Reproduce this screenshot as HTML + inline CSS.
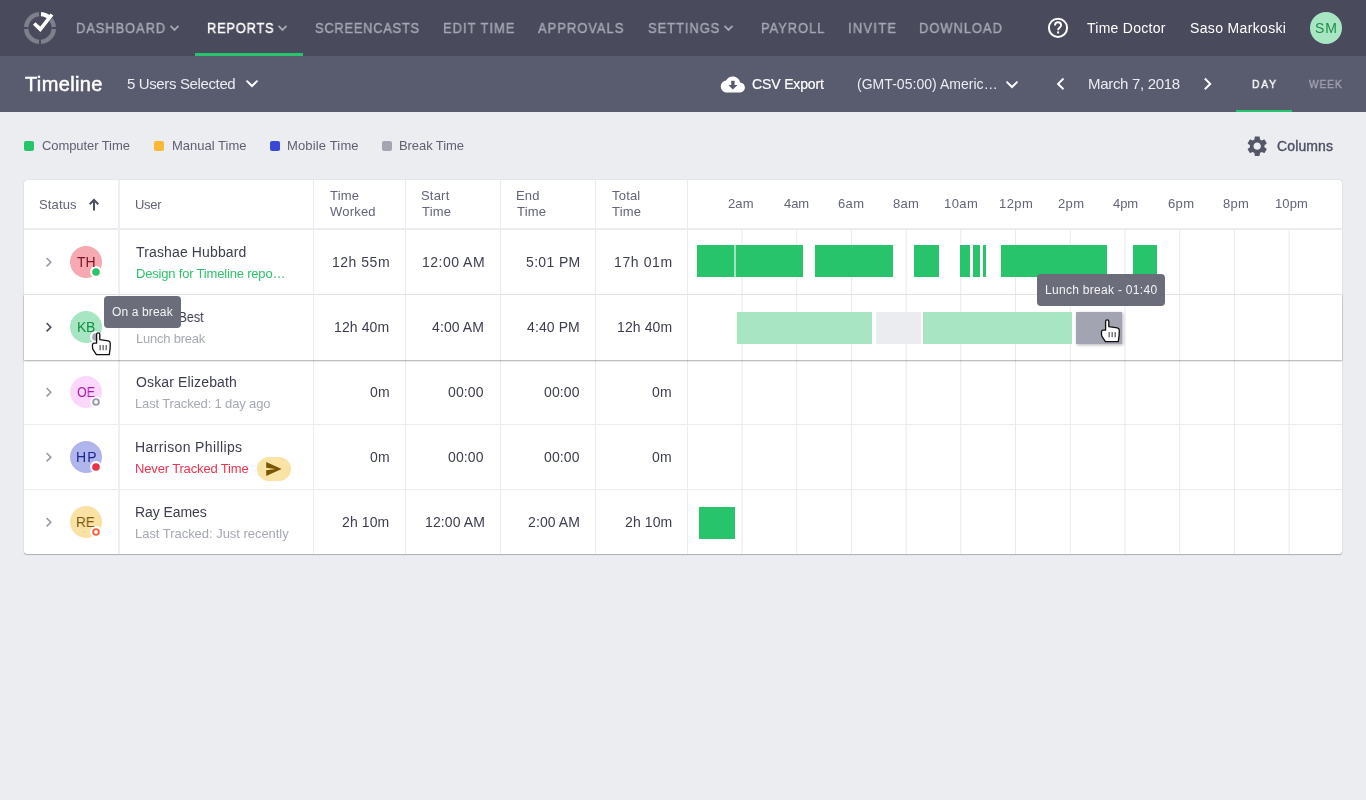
<!DOCTYPE html>
<html><head><meta charset="utf-8">
<style>
*{margin:0;padding:0;box-sizing:border-box;}
html,body{width:1366px;height:800px;overflow:hidden;background:#ecedf1;font-family:"Liberation Sans",sans-serif;position:relative;}
.a{position:absolute;}
.t{position:absolute;white-space:nowrap;line-height:1;will-change:transform;}
.vl{position:absolute;width:1px;background:#ebecf0;}
.hl{position:absolute;height:1px;background:#ebecf0;}
.av{position:absolute;width:32px;height:32px;border-radius:50%;}
.dot{position:absolute;width:12px;height:12px;border-radius:50%;background:#fff;}
.dot i{position:absolute;left:2px;top:2px;width:8px;height:8px;border-radius:50%;}
.bar{position:absolute;height:32px;background:#27c46c;}
.lg{position:absolute;top:141px;width:10px;height:10px;border-radius:2px;}
</style></head><body>
<!-- NAV -->
<div class="a" style="left:0;top:0;width:1366px;height:56px;background:#4a4a5d"></div>
<svg class="a" style="left:20px;top:8px" width="40" height="40" viewBox="0 0 40 40">
  <g fill="none" stroke="#7f808d" stroke-width="4.35">
    <path d="M30.95 11.44 A13.9 13.9 0 0 1 33.86 19.01"/>
    <path d="M33.86 20.99 A13.9 13.9 0 0 1 20.99 33.86"/>
    <path d="M19.01 33.86 A13.9 13.9 0 0 1 6.14 20.99"/>
    <path d="M6.14 19.01 A13.9 13.9 0 0 1 19.01 6.14"/>
  </g>
  <path d="M20.99 6.14 A13.9 13.9 0 0 1 30.17 10.52" fill="none" stroke="#fff" stroke-width="4.35"/>
  <path d="M15.4 14.2 L20.3 18.4 L30.4 5.6 L33.4 7.4 L20.5 24.0 L13.0 16.8 Z" fill="#fff"/>
</svg>
<svg class="a" style="left:168.6px;top:24px" width="11" height="8" viewBox="0 0 11 8"><path d="M1.5 1.9 L5.5 5.9 L9.5 1.9" fill="none" stroke="#a6a7b3" stroke-width="1.8"/></svg>
<svg class="a" style="left:276.7px;top:24px" width="11" height="8" viewBox="0 0 11 8"><path d="M1.5 1.9 L5.5 5.9 L9.5 1.9" fill="none" stroke="#a6a7b3" stroke-width="1.8"/></svg>
<svg class="a" style="left:722.6px;top:24px" width="11" height="8" viewBox="0 0 11 8"><path d="M1.5 1.9 L5.5 5.9 L9.5 1.9" fill="none" stroke="#a6a7b3" stroke-width="1.8"/></svg>
<div class="a" style="left:195px;top:53px;width:108px;height:3px;background:#27c46c"></div>
<svg class="a" style="left:1047px;top:17.4px" width="22" height="22" viewBox="0 0 22 22">
  <circle cx="11" cy="10.8" r="9.1" fill="none" stroke="#fff" stroke-width="2"/>
  <path d="M8 8.4 C8 6.5 9.3 5.2 11 5.2 C12.8 5.2 14.1 6.5 14.1 8.2 C14.1 10.5 11.1 10.6 11.1 13.2" fill="none" stroke="#fff" stroke-width="1.9"/>
  <rect x="10.1" y="14.4" width="2" height="2.1" fill="#fff"/>
</svg>
<div class="av" style="left:1310px;top:12px;background:#a8e6c3"></div>
<!-- SUB -->
<div class="a" style="left:0;top:56px;width:1366px;height:56px;background:#595b6f"></div>
<svg class="a" style="left:244px;top:78px" width="16" height="11" viewBox="0 0 16 11"><path d="M2.5 2.6 L8 8 L13.5 2.6" fill="none" stroke="#fff" stroke-width="2"/></svg>
<svg class="a" style="left:1004px;top:79px" width="16" height="11" viewBox="0 0 16 11"><path d="M2.5 2.6 L8 8 L13.5 2.6" fill="none" stroke="#fff" stroke-width="2"/></svg>
<svg class="a" style="left:1054px;top:77px" width="12" height="15" viewBox="0 0 12 15"><path d="M9.5 1.5 L4.1 6.9 L9.5 12.3" fill="none" stroke="#fff" stroke-width="2"/></svg>
<svg class="a" style="left:1202px;top:77px" width="12" height="15" viewBox="0 0 12 15"><path d="M2.8 1.5 L8.2 6.9 L2.8 12.3" fill="none" stroke="#fff" stroke-width="2"/></svg>
<svg class="a" style="left:720px;top:74.6px" width="26" height="19" viewBox="0 0 26 19">
  <path d="M20.2 7.6 C19.5 3.9 16.3 1.5 12.8 1.5 C9.9 1.5 7.3 3.1 6.1 5.6 C3.1 5.9 0.8 8.5 0.8 11.6 C0.8 14.9 3.5 17.6 6.8 17.6 L19.8 17.6 C22.6 17.6 24.9 15.3 24.9 12.6 C24.9 10 22.8 7.8 20.2 7.6 Z" fill="#fff"/>
  <path d="M11.2 5.8 H14.6 V10.1 H17.5 L12.9 14.6 L8.3 10.1 H11.2 Z" fill="#595b6f"/>
</svg>
<div class="a" style="left:1236px;top:110px;width:56px;height:2px;background:#27c46c"></div>
<!-- LEGEND -->
<div class="lg" style="left:24px;background:#27c46c"></div>
<div class="lg" style="left:154px;background:#f9b934"></div>
<div class="lg" style="left:270px;background:#3b48d6"></div>
<div class="lg" style="left:382px;background:#a4a5b0"></div>
<svg class="a" style="left:1244.9px;top:133.7px" width="24.4" height="24.4" viewBox="0 0 24 24">
  <path fill="#555769" d="M19.14 12.94c.04-.3.06-.61.06-.94 0-.32-.02-.64-.07-.94l2.03-1.58c.18-.14.23-.41.12-.61l-1.92-3.32c-.12-.22-.37-.29-.59-.22l-2.39.96c-.5-.38-1.03-.7-1.62-.94l-.36-2.54c-.04-.24-.24-.41-.48-.41h-3.84c-.24 0-.43.17-.47.41l-.36 2.54c-.59.24-1.13.57-1.62.94l-2.39-.96c-.22-.08-.47 0-.59.22L2.74 8.87c-.12.21-.08.47.12.61l2.03 1.58c-.05.3-.09.63-.09.94s.02.64.07.94l-2.03 1.58c-.18.14-.23.41-.12.61l1.92 3.32c.12.22.37.29.59.22l2.39-.96c.5.38 1.03.7 1.62.94l.36 2.54c.05.24.24.41.48.41h3.84c.24 0 .44-.17.47-.41l.36-2.54c.59-.24 1.13-.56 1.62-.94l2.39.96c.22.08.47 0 .59-.22l1.92-3.32c.12-.22.07-.47-.12-.61l-2.01-1.58zM12 15.6c-1.98 0-3.6-1.62-3.6-3.6s1.62-3.6 3.6-3.6 3.6 1.62 3.6 3.6-1.62 3.6-3.6 3.6z"/>
</svg>
<!-- CARD -->
<div class="a" style="left:24px;top:180px;width:1318px;height:374px;background:#fff;border-radius:3px;box-shadow:0 1px 1px rgba(0,0,0,0.25),0 0 1px rgba(0,0,0,0.22)"></div>
<div class="hl" style="left:24px;top:228px;width:1318px;height:2px;background:#ebecf0"></div>
<div class="hl" style="left:24px;top:294px;width:1318px"></div>
<div class="hl" style="left:24px;top:359px;width:1318px"></div>
<div class="hl" style="left:24px;top:424px;width:1318px"></div>
<div class="hl" style="left:24px;top:489px;width:1318px"></div>
<div class="vl" style="left:118px;top:180px;height:374px;width:2px;background:#eeeff2"></div>
<div class="vl" style="left:313px;top:180px;height:374px"></div>
<div class="vl" style="left:405px;top:180px;height:374px"></div>
<div class="vl" style="left:500px;top:180px;height:374px"></div>
<div class="vl" style="left:595px;top:180px;height:374px"></div>
<div class="vl" style="left:687px;top:180px;height:374px"></div>
<svg class="a" style="left:0;top:230px" width="1366" height="324"><g stroke="#e8eaeb" stroke-width="1"><line x1="742.00" y1="0" x2="742.00" y2="324"/><line x1="796.71" y1="0" x2="796.71" y2="324"/><line x1="851.42" y1="0" x2="851.42" y2="324"/><line x1="906.13" y1="0" x2="906.13" y2="324"/><line x1="960.84" y1="0" x2="960.84" y2="324"/><line x1="1015.55" y1="0" x2="1015.55" y2="324"/><line x1="1070.26" y1="0" x2="1070.26" y2="324"/><line x1="1124.97" y1="0" x2="1124.97" y2="324"/><line x1="1179.68" y1="0" x2="1179.68" y2="324"/><line x1="1234.39" y1="0" x2="1234.39" y2="324"/><line x1="1289.10" y1="0" x2="1289.10" y2="324"/></g></svg>
<!-- row 2 elevated -->
<div class="a" style="left:24px;top:295px;width:1318px;height:65px;background:#fff;box-shadow:0 1px 1.5px rgba(0,0,0,0.3),0 0 1px rgba(0,0,0,0.2)"></div>
<div class="vl" style="left:118px;top:295px;height:65px;width:2px;background:#eeeff2"></div>
<div class="vl" style="left:313px;top:295px;height:65px"></div>
<div class="vl" style="left:405px;top:295px;height:65px"></div>
<div class="vl" style="left:500px;top:295px;height:65px"></div>
<div class="vl" style="left:595px;top:295px;height:65px"></div>
<div class="vl" style="left:687px;top:295px;height:65px"></div>
<svg class="a" style="left:0;top:295px" width="1366" height="65"><g stroke="#e8eaeb" stroke-width="1"><line x1="742.00" y1="0" x2="742.00" y2="65"/><line x1="796.71" y1="0" x2="796.71" y2="65"/><line x1="851.42" y1="0" x2="851.42" y2="65"/><line x1="906.13" y1="0" x2="906.13" y2="65"/><line x1="960.84" y1="0" x2="960.84" y2="65"/><line x1="1015.55" y1="0" x2="1015.55" y2="65"/><line x1="1070.26" y1="0" x2="1070.26" y2="65"/><line x1="1124.97" y1="0" x2="1124.97" y2="65"/><line x1="1179.68" y1="0" x2="1179.68" y2="65"/><line x1="1234.39" y1="0" x2="1234.39" y2="65"/><line x1="1289.10" y1="0" x2="1289.10" y2="65"/></g></svg>
<svg class="a" style="left:86.7px;top:197px" width="14" height="16" viewBox="0 0 14 16"><path d="M7 13.6 V3.2 M2.7 7.2 L7 2.9 L11.3 7.2" fill="none" stroke="#4b4d60" stroke-width="2"/></svg>
<svg class="a" style="left:44px;top:255.6px" width="10" height="12" viewBox="0 0 10 12"><path d="M2.6 2 L6.8 6.2 L2.6 10.4" fill="none" stroke="#9a9ba8" stroke-width="1.6"/></svg>
<div class="av" style="left:70px;top:246px;background:#f6a9b0"></div>
<svg class="a" style="left:90px;top:266px" width="12" height="12" viewBox="0 0 12 12"><circle cx="6" cy="6" r="6" fill="#fff"/><circle cx="6" cy="6" r="3.8" fill="#2cc36b"/></svg>
<svg class="a" style="left:44px;top:320.6px" width="10" height="12" viewBox="0 0 10 12"><path d="M2.6 2 L6.8 6.2 L2.6 10.4" fill="none" stroke="#4b4d5e" stroke-width="1.6"/></svg>
<div class="av" style="left:70px;top:311px;background:#a8e6c3"></div>
<svg class="a" style="left:90px;top:331px" width="12" height="12" viewBox="0 0 12 12"><circle cx="6" cy="6" r="6" fill="#fff"/><circle cx="6" cy="6" r="3.8" fill="#a4a5b1"/></svg>
<svg class="a" style="left:44px;top:385.6px" width="10" height="12" viewBox="0 0 10 12"><path d="M2.6 2 L6.8 6.2 L2.6 10.4" fill="none" stroke="#9a9ba8" stroke-width="1.6"/></svg>
<div class="av" style="left:70px;top:376px;background:#fbd8fb"></div>
<svg class="a" style="left:90px;top:396px" width="12" height="12" viewBox="0 0 12 12"><circle cx="6" cy="6" r="6" fill="#fff"/><circle cx="6" cy="6" r="2.85" fill="#fff" stroke="#9a9ba8" stroke-width="1.9"/></svg>
<svg class="a" style="left:44px;top:450.6px" width="10" height="12" viewBox="0 0 10 12"><path d="M2.6 2 L6.8 6.2 L2.6 10.4" fill="none" stroke="#9a9ba8" stroke-width="1.6"/></svg>
<div class="av" style="left:70px;top:441px;background:#b1b5ee"></div>
<svg class="a" style="left:90px;top:461px" width="12" height="12" viewBox="0 0 12 12"><circle cx="6" cy="6" r="6" fill="#fff"/><circle cx="6" cy="6" r="3.8" fill="#ee2f4a"/></svg>
<svg class="a" style="left:44px;top:515.6px" width="10" height="12" viewBox="0 0 10 12"><path d="M2.6 2 L6.8 6.2 L2.6 10.4" fill="none" stroke="#9a9ba8" stroke-width="1.6"/></svg>
<div class="av" style="left:70px;top:506px;background:#fae2a5"></div>
<svg class="a" style="left:90px;top:526px" width="12" height="12" viewBox="0 0 12 12"><circle cx="6" cy="6" r="6" fill="#fff"/><circle cx="6" cy="6" r="2.85" fill="#fff" stroke="#f0603c" stroke-width="1.9"/></svg>
<div class="bar" style="left:697.4px;top:245px;width:105.6px;background:#27c46c;"></div>
<div class="bar" style="left:815px;top:245px;width:78.0px;background:#27c46c;"></div>
<div class="bar" style="left:914px;top:245px;width:25.0px;background:#27c46c;"></div>
<div class="bar" style="left:960px;top:245px;width:10.0px;background:#27c46c;"></div>
<div class="bar" style="left:972.5px;top:245px;width:7.0px;background:#27c46c;"></div>
<div class="bar" style="left:983.2px;top:245px;width:3.0px;background:#27c46c;"></div>
<div class="bar" style="left:1001px;top:245px;width:106.0px;background:#27c46c;"></div>
<div class="bar" style="left:1132.5px;top:245px;width:24.5px;background:#27c46c;"></div>
<div class="a" style="left:734px;top:245px;width:2px;height:32px;background:#a5e3bf"></div>
<div class="bar" style="left:736.5px;top:312px;width:135.0px;background:#a8e6c3;"></div>
<div class="bar" style="left:875.5px;top:312px;width:45.0px;background:#ebecf0;"></div>
<div class="bar" style="left:922.5px;top:312px;width:149.8px;background:#a8e6c3;"></div>
<div class="bar" style="left:1076px;top:312px;width:46.0px;background:#a3a4b1;box-shadow:1px 1px 3px rgba(0,0,0,0.3)"></div>
<div class="bar" style="left:699.3px;top:507px;width:35.3px;background:#27c46c;"></div>
<div class="a" style="left:257px;top:457px;width:34px;height:24px;border-radius:12px;background:#f9e3a6"></div>
<svg class="a" style="left:265px;top:461.8px" width="17" height="14" viewBox="0 0 17 14"><path d="M1.2 0.1 L16.6 7 L1.2 13.9 L1.2 8.2 L10.5 7 L1.2 5.8 Z" fill="#7a5604"/></svg>
<div class="t" style="left:75.82px;top:21.0px;font-size:14px;color:#a6a7b3;letter-spacing:1.025px;-webkit-text-stroke:0.4px #a6a7b3;transform:scaleX(0.92);transform-origin:0 0;">DASHBOARD</div>
<div class="t" style="left:206.72px;top:21.0px;font-size:14px;color:#ffffff;letter-spacing:0.824px;-webkit-text-stroke:0.4px #ffffff;transform:scaleX(0.92);transform-origin:0 0;">REPORTS</div>
<div class="t" style="left:314.91px;top:21.0px;font-size:14px;color:#a6a7b3;letter-spacing:0.819px;-webkit-text-stroke:0.4px #a6a7b3;transform:scaleX(0.92);transform-origin:0 0;">SCREENCASTS</div>
<div class="t" style="left:442.72px;top:21.0px;font-size:14px;color:#a6a7b3;letter-spacing:1.117px;-webkit-text-stroke:0.4px #a6a7b3;transform:scaleX(0.92);transform-origin:0 0;">EDIT TIME</div>
<div class="t" style="left:538.45px;top:21.0px;font-size:14px;color:#a6a7b3;letter-spacing:1.129px;-webkit-text-stroke:0.4px #a6a7b3;transform:scaleX(0.92);transform-origin:0 0;">APPROVALS</div>
<div class="t" style="left:647.61px;top:21.0px;font-size:14px;color:#a6a7b3;letter-spacing:1.062px;-webkit-text-stroke:0.4px #a6a7b3;transform:scaleX(0.92);transform-origin:0 0;">SETTINGS</div>
<div class="t" style="left:761.02px;top:21.0px;font-size:14px;color:#a6a7b3;letter-spacing:1.058px;-webkit-text-stroke:0.4px #a6a7b3;transform:scaleX(0.92);transform-origin:0 0;">PAYROLL</div>
<div class="t" style="left:848.34px;top:21.0px;font-size:14px;color:#a6a7b3;letter-spacing:1.419px;-webkit-text-stroke:0.4px #a6a7b3;transform:scaleX(0.92);transform-origin:0 0;">INVITE</div>
<div class="t" style="left:919.42px;top:21.0px;font-size:14px;color:#a6a7b3;letter-spacing:1.080px;-webkit-text-stroke:0.4px #a6a7b3;transform:scaleX(0.92);transform-origin:0 0;">DOWNLOAD</div>
<div class="t" style="left:1086.67px;top:21.0px;font-size:14px;color:#ffffff;letter-spacing:0.270px;">Time Doctor</div>
<div class="t" style="left:1190.03px;top:21.0px;font-size:14px;color:#ffffff;letter-spacing:0.347px;">Saso Markoski</div>
<div class="t" style="left:1314.93px;top:21.4px;font-size:14px;color:#1f8c49;letter-spacing:1.025px;">SM</div>
<div class="t" style="left:25.30px;top:73.7px;font-size:20px;color:#ffffff;letter-spacing:0.363px;-webkit-text-stroke:0.5px #ffffff;">Timeline</div>
<div class="t" style="left:127.16px;top:75.9px;font-size:15px;color:#ecedf2;letter-spacing:-0.367px;">5 Users Selected</div>
<div class="t" style="left:752.49px;top:77.4px;font-size:14px;color:#ffffff;letter-spacing:-0.137px;-webkit-text-stroke:0.2px #ffffff;">CSV Export</div>
<div class="t" style="left:856.59px;top:77.4px;font-size:14px;color:#ecedf2;letter-spacing:0.034px;">(GMT-05:00) Americ…</div>
<div class="t" style="left:1087.55px;top:76.4px;font-size:15px;color:#ecedf2;letter-spacing:-0.313px;">March 7, 2018</div>
<div class="t" style="left:1252.08px;top:78.6px;font-size:11.5px;color:#ffffff;letter-spacing:1.883px;-webkit-text-stroke:0.4px #ffffff;transform:scaleX(0.9);transform-origin:0 0;">DAY</div>
<div class="t" style="left:1308.54px;top:78.6px;font-size:11.5px;color:#a3a4b0;letter-spacing:1.105px;-webkit-text-stroke:0.4px #a3a4b0;transform:scaleX(0.88);transform-origin:0 0;">WEEK</div>
<div class="t" style="left:41.80px;top:139.0px;font-size:13px;color:#5f6173;letter-spacing:-0.080px;">Computer Time</div>
<div class="t" style="left:171.62px;top:139.0px;font-size:13px;color:#5f6173;letter-spacing:0.004px;">Manual Time</div>
<div class="t" style="left:287.12px;top:139.0px;font-size:13px;color:#5f6173;letter-spacing:0.152px;">Mobile Time</div>
<div class="t" style="left:399.12px;top:139.0px;font-size:13px;color:#5f6173;letter-spacing:-0.082px;">Break Time</div>
<div class="t" style="left:1277.05px;top:138.8px;font-size:14px;color:#4f5164;letter-spacing:0.124px;-webkit-text-stroke:0.4px #4f5164;">Columns</div>
<div class="t" style="left:39.30px;top:198.1px;font-size:13px;color:#62647a;letter-spacing:0.140px;">Status</div>
<div class="t" style="left:135.20px;top:198.1px;font-size:13px;color:#62647a;letter-spacing:-0.270px;">User</div>
<div class="t" style="left:329.99px;top:189.3px;font-size:13px;color:#62647a;letter-spacing:0.200px;">Time</div>
<div class="t" style="left:330.07px;top:205.2px;font-size:13px;color:#62647a;letter-spacing:0.200px;">Worked</div>
<div class="t" style="left:421.20px;top:189.3px;font-size:13px;color:#62647a;letter-spacing:0.200px;">Start</div>
<div class="t" style="left:421.79px;top:205.2px;font-size:13px;color:#62647a;letter-spacing:0.200px;">Time</div>
<div class="t" style="left:516.12px;top:189.3px;font-size:13px;color:#62647a;letter-spacing:0.200px;">End</div>
<div class="t" style="left:516.89px;top:205.2px;font-size:13px;color:#62647a;letter-spacing:0.200px;">Time</div>
<div class="t" style="left:612.09px;top:189.3px;font-size:13px;color:#62647a;letter-spacing:0.200px;">Total</div>
<div class="t" style="left:612.09px;top:205.2px;font-size:13px;color:#62647a;letter-spacing:0.200px;">Time</div>
<div class="t" style="left:728.33px;top:197.4px;font-size:13px;color:#62647a;letter-spacing:0.106px;">2am</div>
<div class="t" style="left:783.69px;top:197.4px;font-size:13px;color:#62647a;letter-spacing:-0.075px;">4am</div>
<div class="t" style="left:837.80px;top:197.4px;font-size:13px;color:#62647a;letter-spacing:0.368px;">6am</div>
<div class="t" style="left:892.88px;top:197.4px;font-size:13px;color:#62647a;letter-spacing:0.326px;">8am</div>
<div class="t" style="left:944.02px;top:197.4px;font-size:13px;color:#62647a;letter-spacing:0.427px;">10am</div>
<div class="t" style="left:999.02px;top:197.4px;font-size:13px;color:#62647a;letter-spacing:0.427px;">12pm</div>
<div class="t" style="left:1057.83px;top:197.4px;font-size:13px;color:#62647a;letter-spacing:0.356px;">2pm</div>
<div class="t" style="left:1113.49px;top:197.4px;font-size:13px;color:#62647a;letter-spacing:-0.075px;">4pm</div>
<div class="t" style="left:1167.80px;top:197.4px;font-size:13px;color:#62647a;letter-spacing:0.368px;">6pm</div>
<div class="t" style="left:1222.88px;top:197.4px;font-size:13px;color:#62647a;letter-spacing:0.326px;">8pm</div>
<div class="t" style="left:1274.52px;top:197.4px;font-size:13px;color:#62647a;letter-spacing:0.094px;">10pm</div>
<div class="t" style="left:136.37px;top:245.2px;font-size:14px;color:#3c3e4f;letter-spacing:0.138px;">Trashae Hubbard</div>
<div class="t" style="left:135.62px;top:266.9px;font-size:13px;color:#2ec26b;letter-spacing:-0.186px;">Design for Timeline repo…</div>
<div class="t" style="left:135.52px;top:310.2px;font-size:14px;color:#3c3e4f;letter-spacing:0.000px;transform:scaleX(0.9049);transform-origin:1.18px 0;">Kaylee Best</div>
<div class="t" style="left:135.62px;top:332.0px;font-size:13px;color:#a6a8b4;letter-spacing:-0.229px;">Lunch break</div>
<div class="t" style="left:135.79px;top:375.1px;font-size:14px;color:#3c3e4f;letter-spacing:0.146px;">Oskar Elizebath</div>
<div class="t" style="left:135.42px;top:397.3px;font-size:13px;color:#a6a8b4;letter-spacing:-0.149px;">Last Tracked: 1 day ago</div>
<div class="t" style="left:135.22px;top:439.8px;font-size:14px;color:#3c3e4f;letter-spacing:0.368px;">Harrison Phillips</div>
<div class="t" style="left:135.32px;top:461.9px;font-size:13px;color:#eb3350;letter-spacing:-0.154px;">Never Tracked Time</div>
<div class="t" style="left:135.22px;top:504.8px;font-size:14px;color:#3c3e4f;letter-spacing:-0.064px;">Ray Eames</div>
<div class="t" style="left:135.32px;top:526.5px;font-size:13px;color:#a6a8b4;letter-spacing:-0.035px;">Last Tracked: Just recently</div>
<div class="t" style="left:331.92px;top:255.2px;font-size:14px;color:#3c3e4f;letter-spacing:0.517px;">12h 55m</div>
<div class="t" style="left:421.82px;top:255.2px;font-size:14px;color:#3c3e4f;letter-spacing:0.495px;">12:00 AM</div>
<div class="t" style="left:525.59px;top:255.2px;font-size:14px;color:#3c3e4f;letter-spacing:0.349px;">5:01 PM</div>
<div class="t" style="left:613.62px;top:255.2px;font-size:14px;color:#3c3e4f;letter-spacing:0.617px;">17h 01m</div>
<div class="t" style="left:334.43px;top:320.2px;font-size:14px;color:#3c3e4f;letter-spacing:0.100px;">12h 40m</div>
<div class="t" style="left:432.44px;top:320.2px;font-size:14px;color:#3c3e4f;letter-spacing:0.100px;">4:00 AM</div>
<div class="t" style="left:527.08px;top:320.2px;font-size:14px;color:#3c3e4f;letter-spacing:0.100px;">4:40 PM</div>
<div class="t" style="left:616.73px;top:320.2px;font-size:14px;color:#3c3e4f;letter-spacing:0.100px;">12h 40m</div>
<div class="t" style="left:369.93px;top:385.2px;font-size:14px;color:#3c3e4f;letter-spacing:0.100px;">0m</div>
<div class="t" style="left:448.47px;top:385.2px;font-size:14px;color:#3c3e4f;letter-spacing:0.100px;">00:00</div>
<div class="t" style="left:543.87px;top:385.2px;font-size:14px;color:#3c3e4f;letter-spacing:0.100px;">00:00</div>
<div class="t" style="left:652.23px;top:385.2px;font-size:14px;color:#3c3e4f;letter-spacing:0.100px;">0m</div>
<div class="t" style="left:369.93px;top:450.2px;font-size:14px;color:#3c3e4f;letter-spacing:0.100px;">0m</div>
<div class="t" style="left:448.47px;top:450.2px;font-size:14px;color:#3c3e4f;letter-spacing:0.100px;">00:00</div>
<div class="t" style="left:543.87px;top:450.2px;font-size:14px;color:#3c3e4f;letter-spacing:0.100px;">00:00</div>
<div class="t" style="left:652.23px;top:450.2px;font-size:14px;color:#3c3e4f;letter-spacing:0.100px;">0m</div>
<div class="t" style="left:342.28px;top:515.2px;font-size:14px;color:#3c3e4f;letter-spacing:0.100px;">2h 10m</div>
<div class="t" style="left:424.58px;top:515.2px;font-size:14px;color:#3c3e4f;letter-spacing:0.100px;">12:00 AM</div>
<div class="t" style="left:527.84px;top:515.2px;font-size:14px;color:#3c3e4f;letter-spacing:0.100px;">2:00 AM</div>
<div class="t" style="left:624.58px;top:515.2px;font-size:14px;color:#3c3e4f;letter-spacing:0.100px;">2h 10m</div>
<div class="t" style="left:76.67px;top:255.0px;font-size:14px;color:#801627;letter-spacing:0.067px;">TH</div>
<div class="t" style="left:76.72px;top:320.0px;font-size:14px;color:#12903f;letter-spacing:-0.453px;">KB</div>
<div class="t" style="left:76.99px;top:385.0px;font-size:14px;color:#b01ab0;letter-spacing:0.000px;transform:scaleX(0.8784);transform-origin:0.71px 0;">OE</div>
<div class="t" style="left:75.52px;top:450.0px;font-size:14px;color:#1d278f;letter-spacing:1.086px;">HP</div>
<div class="t" style="left:76.32px;top:515.0px;font-size:14px;color:#7b5a12;letter-spacing:0.000px;transform:scaleX(0.9691);transform-origin:1.18px 0;">RE</div>
<div class="a" style="left:104px;top:296px;width:77px;height:32px;border-radius:4px;background:#6b6d7a"></div>
<div class="a" style="left:1037px;top:274px;width:128px;height:32px;border-radius:4px;background:#6b6d7a"></div>
<div class="t" style="left:112.00px;top:306.1px;font-size:12px;color:#f4f4f7;letter-spacing:0.140px;z-index:0;">On a break</div>
<div class="t" style="left:1044.62px;top:283.8px;font-size:12px;color:#f4f4f7;letter-spacing:0.295px;">Lunch break - 01:40</div>
<svg class="a" style="left:86px;top:326px" width="28" height="32" viewBox="0 0 28 32"><path d="M10.6 17.2 L10.6 8.4 Q10.6 6.8 12.2 6.8 Q13.8 6.8 13.8 8.4 L13.8 13.6 L22.3 14.9 Q24.3 15.3 24.3 17.6 L24.1 22.6 L23.3 28.6 L10.4 28.6 L6.8 23.2 Q6.3 21.8 6.5 18.6 Q6.7 17.2 8.2 17.2 Z" fill="#fff" stroke="#111" stroke-width="1.3" stroke-linejoin="round"/><path d="M14.2 19 V24.2 M17.2 19 V24.2 M20.2 19 V24.2" stroke="#777" stroke-width="1.5"/></svg>
<svg class="a" style="left:1095px;top:313px" width="28" height="32" viewBox="0 0 28 32"><path d="M10.6 17.2 L10.6 8.4 Q10.6 6.8 12.2 6.8 Q13.8 6.8 13.8 8.4 L13.8 13.6 L22.3 14.9 Q24.3 15.3 24.3 17.6 L24.1 22.6 L23.3 28.6 L10.4 28.6 L6.8 23.2 Q6.3 21.8 6.5 18.6 Q6.7 17.2 8.2 17.2 Z" fill="#fff" stroke="#111" stroke-width="1.3" stroke-linejoin="round"/><path d="M14.2 19 V24.2 M17.2 19 V24.2 M20.2 19 V24.2" stroke="#777" stroke-width="1.5"/></svg>
</body></html>
